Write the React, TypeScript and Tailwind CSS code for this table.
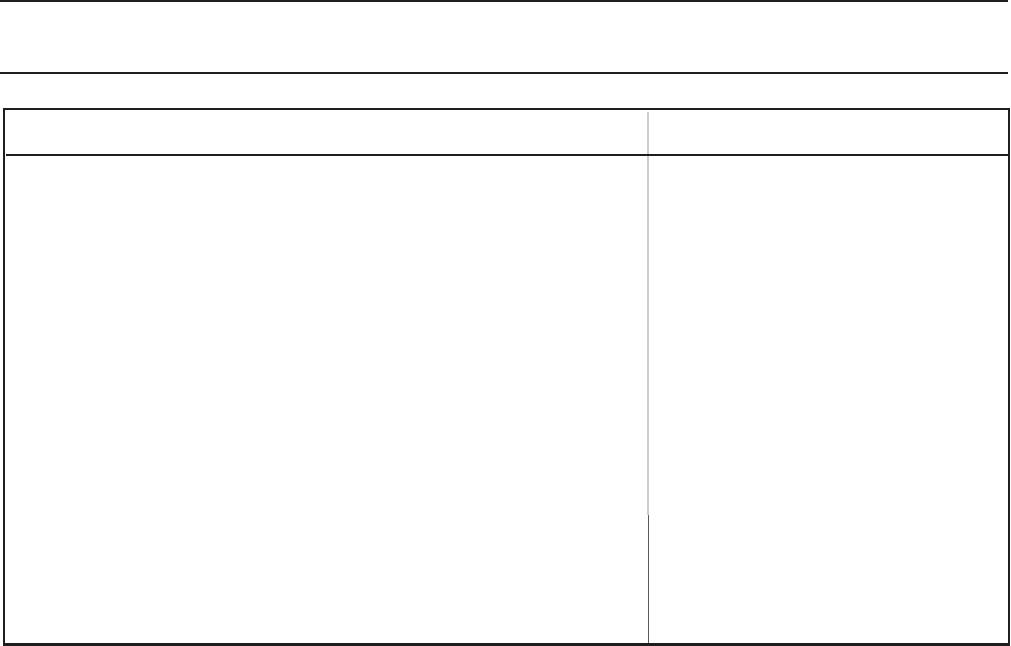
export default function App() {
  return (
    <div className="w-[1011px] h-[646px] bg-white overflow-hidden flex flex-col">
      <div className="w-[1008px] h-[2px] bg-[#1e1e1e]" />
      <div className="h-[70px]" />
      <div className="w-[1008px] h-[2px] bg-[#1e1e1e]" />
      <div className="h-[34px]" />
      <div className="ml-[3px] w-[1007px] h-[538px] border-2 border-[#1e1e1e] border-b-[3px] flex flex-col">
        <div className="h-[44px] flex">
          <div className="w-[642px]" />
          <div className="mt-[2px] w-[2px] bg-[#cccccc]" />
          <div className="flex-1" />
        </div>
        <div className="ml-[1px] h-[2px] bg-[#1e1e1e]" />
        <div className="flex-1 flex">
          <div className="w-[642px]" />
          <div className="flex flex-col w-[2px]">
            <div className="h-[359px] bg-[#cccccc]" />
            <div className="flex-1 ml-[1px] w-[1px] bg-[#5a5a5a]" />
          </div>
          <div className="flex-1" />
        </div>
      </div>
    </div>
  )
}
